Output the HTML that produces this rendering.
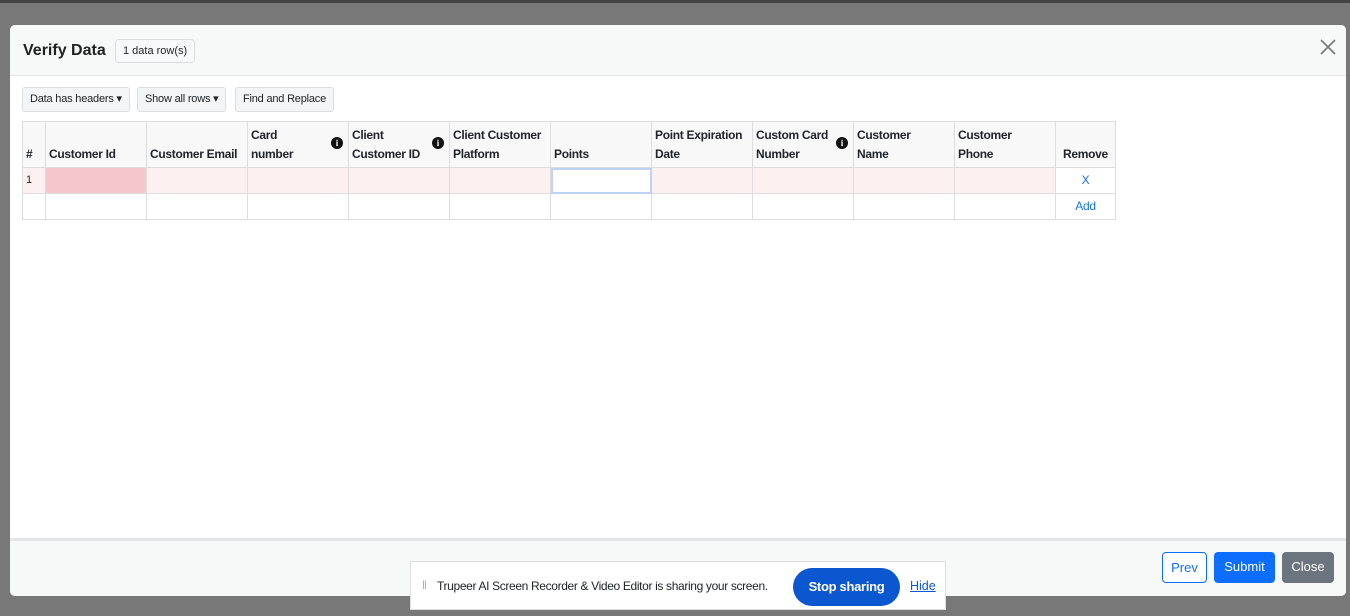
<!DOCTYPE html>
<html><head><meta charset="utf-8"><style>
*{box-sizing:border-box;margin:0;padding:0}
body{width:1350px;height:616px;overflow:hidden;background:#787878;font-family:"Liberation Sans",sans-serif;position:relative;font-size:13px;color:#212529}
.top{position:absolute;left:0;top:0;width:1350px;height:3px;background:#444}
.modal{position:absolute;left:10px;top:25px;width:1336px;height:571px;background:#fff;border-radius:5px;overflow:hidden}
.hdr{height:51px;background:#f7f8f8;border-bottom:1px solid #e2e4e6;position:relative}
.hdr h1{position:absolute;left:13px;top:17px;font-size:16px;font-weight:bold;color:#222}
.badge{position:absolute;left:105px;top:14px;height:24px;border:1px solid #ddd;border-radius:4px;padding:0 7px;font-size:11px;line-height:22px;background:#f8f9fa}
.x{position:absolute;right:10px;top:14px}
.btn{position:absolute;top:62px;height:25px;border:1px solid #ddd;border-radius:3px;background:#f4f5f6;font-size:11px;line-height:23px;padding:0 7px;letter-spacing:-0.2px}
table{position:absolute;left:12px;top:96px;border-collapse:collapse;table-layout:fixed;width:1093px}
td,th{border:1px solid #ddd;font-size:12px;font-weight:bold;text-align:left;vertical-align:bottom;padding:2px 3px 3px;letter-spacing:-0.3px;overflow:hidden;white-space:nowrap}
th{background:#f8f8f8;height:46px;position:relative;line-height:19px}
td{height:26px;font-weight:normal;vertical-align:middle}
.i{position:absolute;right:5px;top:15px;width:12px;height:12px;border-radius:50%;background:#111;color:#fff;font-size:9px;text-align:center;line-height:12px;font-family:"Liberation Serif",serif;font-weight:bold;letter-spacing:0}
.r1 td{background:#fdf0f0}
.blue{color:#1a73e8;text-align:center}
.ftr{position:absolute;left:0;top:513px;width:1336px;height:58px;background:#f7f8f8;border-top:3px solid #e4e5e6}
.fb{position:absolute;top:11px;height:31px;border-radius:4px;font-size:13px;line-height:29px;text-align:center}
.ban{position:absolute;left:410px;top:561px;width:536px;height:49px;background:#fff;border:1px solid #ddd}
</style></head><body>
<div class="top"></div>
<div class="modal">
<div class="hdr"><h1>Verify Data</h1><div class="badge">1 data row(s)</div><svg class="x" width="16" height="16" viewBox="0 0 16 16"><path d="M1 1L15 15M15 1L1 15" stroke="#777" stroke-width="1.6"/></svg></div>
<div class="btn" style="left:12px">Data has headers ▾</div>
<div class="btn" style="left:127px">Show all rows ▾</div>
<div class="btn" style="left:225px">Find and Replace</div>
<table>
<colgroup><col style="width:23px"><col span="10" style="width:101px"><col style="width:60px"></colgroup>
<tr><th>#</th><th>Customer Id</th><th>Customer Email</th><th>Card<br>number<span class="i">i</span></th><th>Client<br>Customer ID<span class="i">i</span></th><th>Client Customer<br>Platform</th><th>Points</th><th>Point Expiration<br>Date</th><th>Custom Card<br>Number<span class="i">i</span></th><th>Customer<br>Name</th><th>Customer<br>Phone</th><th style="text-align:center">Remove</th></tr>
<tr class="r1"><td style="font-size:11px">1</td><td style="background:#f5c6cb"></td><td></td><td></td><td></td><td></td><td style="background:#fff;outline:2px solid #bcd3f5;outline-offset:-2px"></td><td></td><td></td><td></td><td></td><td class="blue" style="background:#fff">X</td></tr>
<tr><td></td><td></td><td></td><td></td><td></td><td></td><td></td><td></td><td></td><td></td><td></td><td class="blue">Add</td></tr>
</table>
<div class="ftr">
<div class="fb" style="left:1152px;width:45px;border:1px solid #0d6efd;color:#0d6efd;background:#fff">Prev</div>
<div class="fb" style="left:1204px;width:61px;background:#0d6efd;color:#fff">Submit</div>
<div class="fb" style="left:1272px;width:52px;background:#6c757d;color:#fff">Close</div>
</div>
</div>
<div class="ban">
<span style="position:absolute;left:11px;top:16px;color:#aaa;font-size:12px">‖</span>
<span style="position:absolute;left:26px;top:17px;font-size:12px;letter-spacing:-0.35px">Trupeer AI Screen Recorder &amp; Video Editor is sharing your screen.</span>
<div style="position:absolute;left:382px;top:6px;width:107px;height:38px;border-radius:19px;background:#0b57d0;color:#fff;font-weight:bold;text-align:center;line-height:38px;font-size:13px;letter-spacing:-0.3px">Stop sharing</div>
<span style="position:absolute;left:499px;top:17px;color:#0b57d0;text-decoration:underline;font-size:12.5px">Hide</span>
</div>
</body></html>
